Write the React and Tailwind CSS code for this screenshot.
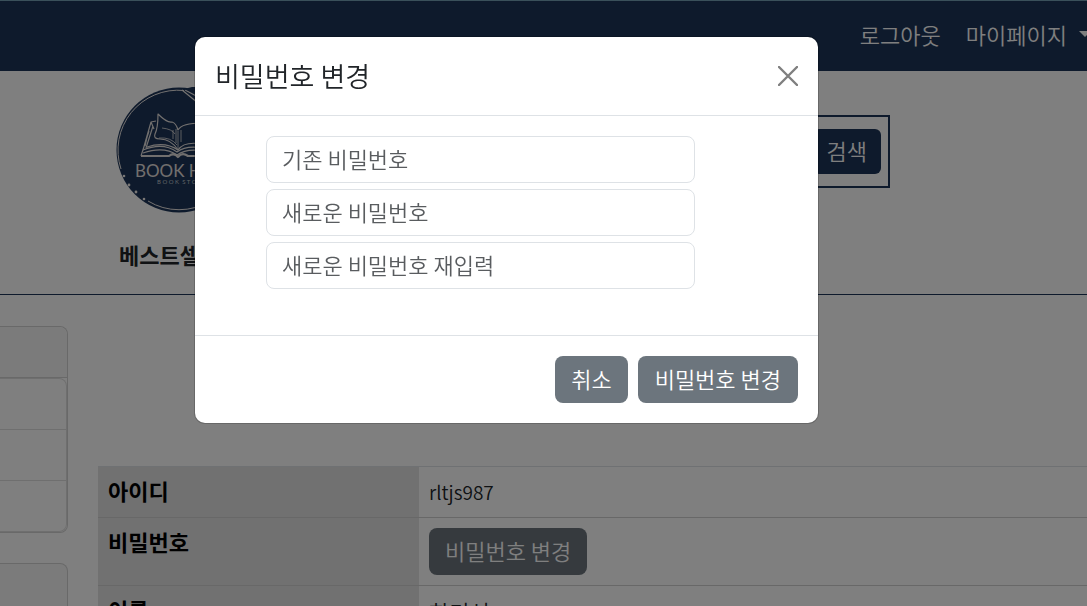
import { useState } from "react";

const rows = [
    { label: "아이디", value: "rltjs987", size: "text-[19px]" },
    { label: "비밀번호", action: "비밀번호 변경" },
    { label: "이름", value: "한기선", size: "text-[22px]" },
];

const fields = [
    { id: "oldPw", label: "기존 비밀번호" },
    { id: "newPw", label: "새로운 비밀번호" },
    { id: "newPwCheck", label: "새로운 비밀번호 재입력" },
];

const Logo = () => (
    <svg viewBox="0 0 126 126" className="block h-[126px] w-[126px]" role="img" aria-label="BOOK HOUSE">
        <circle cx="63" cy="63" r="62.5" fill="#1c3458" />
        <path d="M5 82A60 60 0 0 1 68 3.5M32 114A59.5 59.5 0 0 0 94 114" fill="none" stroke="#e8e4e2" strokeWidth="1" />
        <g fill="#f0ecea">
            <circle cx="8" cy="89" r="1.3" />
            <circle cx="13" cy="98" r="1.4" />
            <circle cx="20" cy="105" r="1.4" />
            <circle cx="28" cy="112" r="1.3" />
        </g>
        <path d="M66 3L82 16M69 3L84 11" fill="none" stroke="#e8e4e2" strokeWidth="1.2" />
        <path d="M68 3Q80 -4 92 4Z" fill="#1c3458" />
        {/* open book */}
        <g fill="none" stroke="#e3dfdd" strokeWidth="1.2" strokeLinejoin="round">
            <path d="M42 27Q51 36 56 35Q60 36 62 43Q66 36 86 36V57Q68 54 62 63Q55 52 44 52Q37 52 39 47Q42 41 42 27Z" />
            <path d="M40 34L35 35L27 63M37 39L30 61M33 44L25 69M35 35L38 42M31 50L29 59" />
            <path d="M25 69H53Q58 65 62 70Q66 65 72 69H92" strokeWidth="2.2" />
            <path d="M27 63Q47 55 61 65Q71 57 92 62M27 66Q48 59 61 68Q72 60 92 65M31 60Q49 54 62 63" />
            <path d="M62 44V63M60 42V56M65 43V55M57 43V52M46 41Q56 42 59 47M43 51Q55 50 61 58" strokeWidth="0.8" />
        </g>
        <text x="19" y="90" fill="#e3dfdd" fontFamily="Lato, sans-serif" fontSize="17" fontWeight="400">BOOK HOUSE</text>
        <text x="41" y="97" fill="#bfc4cb" fontFamily="Lato, sans-serif" fontSize="6" fontWeight="400">B O O K&nbsp; S T O R E</text>
    </svg>
);

const Header = () => (
    <>
        <nav className="flex h-[71px] items-center justify-end gap-[25px] border-t border-[#75a0b4] bg-[#1c3458] pb-1 text-white">
            <a href="#logout">로그아웃</a>
            <a href="#mypage" className="-mr-1 flex items-center gap-3">
                마이페이지
                <svg viewBox="0 0 12 6" className="h-[6px] w-[12px]"><path d="M0 0H12L6 6Z" fill="currentColor" /></svg>
            </a>
        </nav>
        <header className="border-b border-[#1c3458] pl-[116px]">
            <div className="flex items-start justify-between pt-4 pr-[197px]">
                <Logo />
                <form className="mt-7 flex w-[540px] items-center justify-end border-2 border-[#1c3458] px-[7px] py-3">
                    <input type="search" aria-label="검색어" className="min-w-0 grow outline-none" />
                    <button type="button" className="h-[45px] rounded-md bg-[#1c3458] px-[14px] pb-1 text-white">검색</button>
                </form>
            </div>
            <div className="flex h-[81px] items-center pl-[3px] font-bold">
                <a href="#best">베스트셀러</a>
            </div>
        </header>
    </>
);

const Sidebar = () => (
    <aside className="flex w-[68px] shrink-0 flex-col gap-[30px]">
        <div className="rounded-r-lg border border-l-0 border-[#d2d2d2]">
            <div className="h-[51px] rounded-tr-lg border-b border-[#d2d2d2] bg-[#f7f7f7]"></div>
            <ul className="divide-y divide-[#dfdfdf] rounded-r-lg border border-l-0 border-[#dfdfdf]">
                <li className="h-[51px]"></li>
                <li className="h-[51px]"></li>
                <li className="h-[50px]"></li>
            </ul>
        </div>
        <div className="h-[206px] rounded-r-lg border border-l-0 border-[#d2d2d2] bg-[#f7f7f7]"></div>
    </aside>
);

const Modal = ({ onClose }) => (
    <div className="fixed inset-0 flex items-start justify-center bg-black/50 pt-[37px] pr-[74px]">
        <div role="dialog" aria-labelledby="modalTitle" className="w-full max-w-[623px] rounded-[10px] bg-white shadow-[0_0_0_1px_rgba(0,0,0,0.18)]">
            <div className="flex h-[79px] items-center justify-between border-b border-[#dee2e6] px-5">
                <h1 id="modalTitle" className="text-[27px]">비밀번호 변경</h1>
                <button type="button" aria-label="닫기" onClick={onClose}>
                    <svg viewBox="0 0 20 20" className="h-5 w-5" fill="none" stroke="#7f7f7f" strokeWidth="2.4" strokeLinecap="round">
                        <path d="M1 1L19 19M19 1L1 19" />
                    </svg>
                </button>
            </div>
            <div className="flex flex-col gap-[6px] pt-5 pr-[123px] pb-[46px] pl-[71px]">
                {fields.map((field) => (
                    <input
                        key={field.id}
                        id={field.id}
                        type="password"
                        aria-label={field.label}
                        placeholder={field.label}
                        className="h-[47px] w-full rounded-lg border border-[#dee2e6] px-[15px] pb-1 placeholder:text-[#595c5f]"
                    />
                ))}
            </div>
            <div className="flex justify-end gap-[10px] border-t border-[#dee2e6] p-5">
                <button type="button" onClick={onClose} className="h-[47px] rounded-lg bg-[#6c757d] px-4 pb-1 text-white">취소</button>
                <button type="button" className="h-[47px] rounded-lg bg-[#6c757d] px-[17px] pb-1 text-white">비밀번호 변경</button>
            </div>
        </div>
    </div>
);

const App = () => {
    const [open, setOpen] = useState(true)

    return (
        <div className="h-screen overflow-hidden bg-white font-['Noto_Sans_CJK_KR',sans-serif] text-[22px] leading-[30px] font-[350] text-[#212529]">
            <Header />
            <main className="flex items-start gap-[30px] pt-[31px]">
                <Sidebar />
                <table className="mt-[140px] w-full table-fixed border-t border-[#dee2e6] text-left">
                    <tbody>
                        {rows.map((row) => (
                            <tr key={row.label} className="border-b border-[#d0d0d0] align-top">
                                <th className="w-[321px] bg-[#e2e2e2] px-[10px] pt-2 pb-3 font-bold text-black">{row.label}</th>
                                <td className="px-[10px] py-[10px]">
                                    {row.action ? (
                                        <button type="button" onClick={() => setOpen(true)} className="block h-[47px] rounded-lg bg-[#6c757d] px-4 pb-1 text-white">{row.action}</button>
                                    ) : (
                                        <span className={`block leading-[30px] ${row.size}`}>{row.value}</span>
                                    )}
                                </td>
                            </tr>
                        ))}
                    </tbody>
                </table>
            </main>
            {open && <Modal onClose={() => setOpen(false)} />}
        </div>
    );
};

export default App;
